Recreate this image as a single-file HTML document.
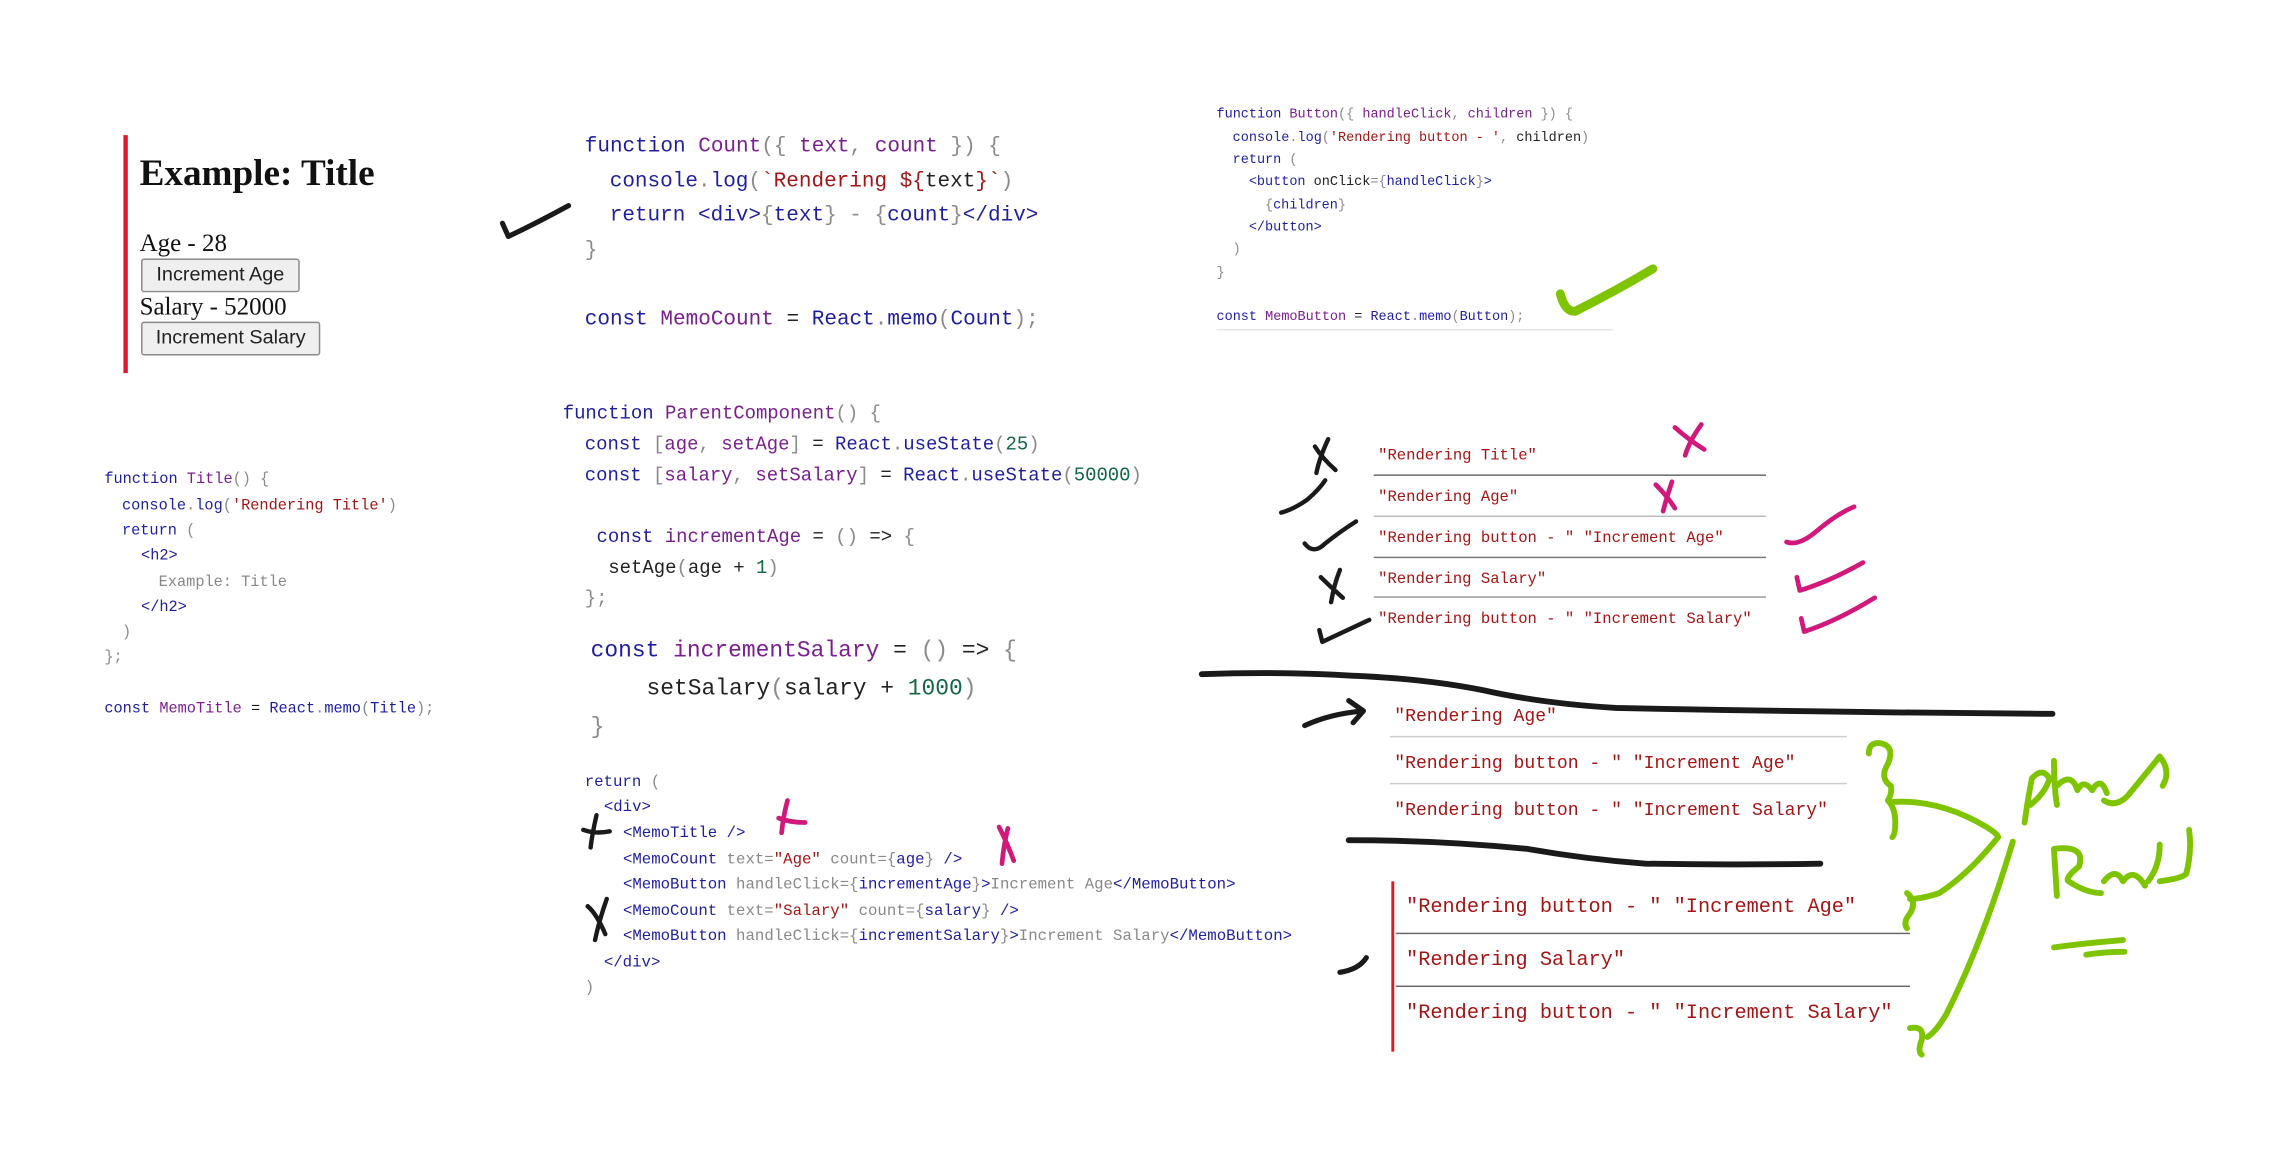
<!DOCTYPE html>
<html><head><meta charset="utf-8">
<style>
html,body{margin:0;padding:0;background:#fff;width:2292px;height:1153px;overflow:hidden}
#s{position:absolute;left:0;top:0;width:1560px;height:785px;transform:scale(1.4692,1.4688);transform-origin:0 0}
.l{position:absolute;white-space:pre;font-family:"Liberation Mono",monospace;line-height:1}
.k{color:#1f1f9e}.f{color:#7a1f8f}.p{color:#8a8a8a}.s{color:#a31515}.n{color:#116644}.t{color:#222}.g{color:#888}
.ser{position:absolute;font-family:"Liberation Serif",serif;color:#111;white-space:pre;line-height:1}
.btn{position:absolute;border:1px solid #8a8a8a;border-radius:2px;background:#efefef;font-family:"Liberation Sans",sans-serif;color:#222;font-size:13.5px;text-align:center;box-sizing:border-box;line-height:20px}
.hr{position:absolute;height:1px;background:#999}
svg{position:absolute;left:0;top:0}
</style></head><body><div id="s">

<div style="position:absolute;left:84px;top:92px;width:3px;height:162px;background:#e0182d"></div>
<div class="ser" style="left:95px;top:106px;font-size:25.3px;font-weight:bold">Example: Title</div>
<div class="ser" style="left:95px;top:157px;font-size:17px">Age - 28</div>
<div class="btn" style="left:96px;top:176px;width:108px;height:23px">Increment Age</div>
<div class="ser" style="left:95px;top:200px;font-size:17px">Salary - 52000</div>
<div class="btn" style="left:96px;top:219px;width:122px;height:23px">Increment Salary</div>

<div style="font-size:14.3px">
<div class="l" style="left:398px;top:93px"><span class="k">function</span> <span class="f">Count</span><span class="p">({</span> <span class="f">text</span><span class="p">,</span> <span class="f">count</span> <span class="p">}) {</span></div>
<div class="l" style="left:415px;top:117px"><span class="k">console</span><span class="p">.</span><span class="k">log</span><span class="p">(</span><span class="s">`Rendering ${</span><span class="t">text</span><span class="s">}`</span><span class="p">)</span></div>
<div class="l" style="left:415px;top:140px"><span class="k">return</span> <span class="k">&lt;div&gt;</span><span class="p">{</span><span class="k">text</span><span class="p">} - {</span><span class="k">count</span><span class="p">}</span><span class="k">&lt;/div&gt;</span></div>
<div class="l p" style="left:398px;top:164px">}</div>
<div class="l" style="left:398px;top:211px"><span class="k">const</span> <span class="f">MemoCount</span> <span class="t">=</span> <span class="k">React</span><span class="p">.</span><span class="k">memo</span><span class="p">(</span><span class="k">Count</span><span class="p">);</span></div>
</div>

<div style="font-size:9.2px">
<div class="l" style="left:828px;top:73px"><span class="k">function</span> <span class="f">Button</span><span class="p">({</span> <span class="f">handleClick</span><span class="p">,</span> <span class="f">children</span> <span class="p">}) {</span></div>
<div class="l" style="left:839px;top:89px"><span class="k">console</span><span class="p">.</span><span class="k">log</span><span class="p">(</span><span class="s">'Rendering button - '</span><span class="p">,</span> <span class="t">children</span><span class="p">)</span></div>
<div class="l k" style="left:839px;top:104px">return <span class="p">(</span></div>
<div class="l" style="left:850px;top:119px"><span class="k">&lt;button</span> <span class="t">onClick</span><span class="p">={</span><span class="k">handleClick</span><span class="p">}</span><span class="k">&gt;</span></div>
<div class="l" style="left:861px;top:135px"><span class="p">{</span><span class="k">children</span><span class="p">}</span></div>
<div class="l k" style="left:850px;top:150px">&lt;/button&gt;</div>
<div class="l p" style="left:839px;top:165px">)</div>
<div class="l p" style="left:828px;top:181px">}</div>
<div class="l" style="left:828px;top:211px"><span class="k">const</span> <span class="f">MemoButton</span> <span class="t">=</span> <span class="k">React</span><span class="p">.</span><span class="k">memo</span><span class="p">(</span><span class="k">Button</span><span class="p">);</span></div>
</div>
<div class="hr" style="left:828px;top:224px;width:270px;background:#e6e6e6"></div>

<div style="font-size:10.4px">
<div class="l" style="left:71px;top:322px"><span class="k">function</span> <span class="f">Title</span><span class="p">() {</span></div>
<div class="l" style="left:83px;top:340px"><span class="k">console</span><span class="p">.</span><span class="k">log</span><span class="p">(</span><span class="s">'Rendering Title'</span><span class="p">)</span></div>
<div class="l k" style="left:83px;top:357px">return <span class="p">(</span></div>
<div class="l k" style="left:96px;top:374px">&lt;h2&gt;</div>
<div class="l g" style="left:108px;top:392px">Example: Title</div>
<div class="l k" style="left:96px;top:409px">&lt;/h2&gt;</div>
<div class="l p" style="left:83px;top:426px">)</div>
<div class="l p" style="left:71px;top:443px">};</div>
<div class="l" style="left:71px;top:478px"><span class="k">const</span> <span class="f">MemoTitle</span> <span class="t">=</span> <span class="k">React</span><span class="p">.</span><span class="k">memo</span><span class="p">(</span><span class="k">Title</span><span class="p">);</span></div>
</div>

<div style="font-size:12.9px">
<div class="l" style="left:383px;top:276px"><span class="k">function</span> <span class="f">ParentComponent</span><span class="p">() {</span></div>
<div class="l" style="left:398px;top:297px"><span class="k">const</span> <span class="p">[</span><span class="f">age</span><span class="p">,</span> <span class="f">setAge</span><span class="p">]</span> <span class="t">=</span> <span class="k">React</span><span class="p">.</span><span class="k">useState</span><span class="p">(</span><span class="n">25</span><span class="p">)</span></div>
<div class="l" style="left:398px;top:318px"><span class="k">const</span> <span class="p">[</span><span class="f">salary</span><span class="p">,</span> <span class="f">setSalary</span><span class="p">]</span> <span class="t">=</span> <span class="k">React</span><span class="p">.</span><span class="k">useState</span><span class="p">(</span><span class="n">50000</span><span class="p">)</span></div>
<div class="l" style="left:406px;top:360px"><span class="k">const</span> <span class="f">incrementAge</span> <span class="t">=</span> <span class="p">()</span> <span class="t">=&gt;</span> <span class="p">{</span></div>
<div class="l" style="left:414px;top:381px"><span class="t">setAge</span><span class="p">(</span><span class="t">age + </span><span class="n">1</span><span class="p">)</span></div>
<div class="l p" style="left:398px;top:402px">};</div>
</div>
<div style="font-size:15.6px">
<div class="l" style="left:402px;top:436px"><span class="k">const</span> <span class="f">incrementSalary</span> <span class="t">=</span> <span class="p">()</span> <span class="t">=&gt;</span> <span class="p">{</span></div>
<div class="l" style="left:440px;top:462px"><span class="t">setSalary</span><span class="p">(</span><span class="t">salary + </span><span class="n">1000</span><span class="p">)</span></div>
<div class="l p" style="left:402px;top:488px">}</div>
</div>
<div style="font-size:10.7px">
<div class="l k" style="left:398px;top:528px">return <span class="p">(</span></div>
<div class="l k" style="left:411px;top:545px">&lt;div&gt;</div>
<div class="l k" style="left:424px;top:563px">&lt;MemoTitle /&gt;</div>
<div class="l" style="left:424px;top:581px"><span class="k">&lt;MemoCount</span> <span class="g">text</span><span class="p">=</span><span class="s">"Age"</span> <span class="g">count</span><span class="p">={</span><span class="k">age</span><span class="p">}</span> <span class="k">/&gt;</span></div>
<div class="l" style="left:424px;top:598px"><span class="k">&lt;MemoButton</span> <span class="g">handleClick</span><span class="p">={</span><span class="k">incrementAge</span><span class="p">}</span><span class="k">&gt;</span><span class="g">Increment Age</span><span class="k">&lt;/MemoButton&gt;</span></div>
<div class="l" style="left:424px;top:616px"><span class="k">&lt;MemoCount</span> <span class="g">text</span><span class="p">=</span><span class="s">"Salary"</span> <span class="g">count</span><span class="p">={</span><span class="k">salary</span><span class="p">}</span> <span class="k">/&gt;</span></div>
<div class="l" style="left:424px;top:633px"><span class="k">&lt;MemoButton</span> <span class="g">handleClick</span><span class="p">={</span><span class="k">incrementSalary</span><span class="p">}</span><span class="k">&gt;</span><span class="g">Increment Salary</span><span class="k">&lt;/MemoButton&gt;</span></div>
<div class="l k" style="left:411px;top:651px">&lt;/div&gt;</div>
<div class="l p" style="left:398px;top:668px">)</div>
</div>

<div style="font-size:10.6px">
<div class="l s" style="left:938px;top:306px">"Rendering Title"</div>
<div class="l s" style="left:938px;top:334px">"Rendering Age"</div>
<div class="l s" style="left:938px;top:362px">"Rendering button - " "Increment Age"</div>
<div class="l s" style="left:938px;top:390px">"Rendering Salary"</div>
<div class="l s" style="left:938px;top:417px">"Rendering button - " "Increment Salary"</div>
</div>
<div class="hr" style="left:935px;top:323px;width:267px;background:#666"></div>
<div class="hr" style="left:935px;top:351px;width:267px;background:#bbb"></div>
<div class="hr" style="left:935px;top:379px;width:267px;background:#777"></div>
<div class="hr" style="left:935px;top:406px;width:267px;background:#999"></div>

<div style="font-size:12.3px">
<div class="l s" style="left:949px;top:482px">"Rendering Age"</div>
<div class="l s" style="left:949px;top:514px">"Rendering button - " "Increment Age"</div>
<div class="l s" style="left:949px;top:546px">"Rendering button - " "Increment Salary"</div>
</div>
<div class="hr" style="left:946px;top:501px;width:311px;background:#ccc"></div>
<div class="hr" style="left:946px;top:533px;width:311px;background:#ccc"></div>

<div style="position:absolute;left:947px;top:600px;width:2px;height:116px;background:#d0202a"></div>
<div style="font-size:13.8px">
<div class="l s" style="left:957px;top:612px">"Rendering button - " "Increment Age"</div>
<div class="l s" style="left:957px;top:648px">"Rendering Salary"</div>
<div class="l s" style="left:957px;top:684px">"Rendering button - " "Increment Salary"</div>
</div>
<div class="hr" style="left:950px;top:635px;width:350px;background:#666"></div>
<div class="hr" style="left:950px;top:671px;width:350px;background:#666"></div>

<svg width="1560" height="785" viewBox="0 0 1560 785" fill="none" stroke-linecap="round" stroke-linejoin="round">
<g stroke="#1a1a1a" stroke-width="3.5">
<path d="M342 152 L346 161 Q365 152 387 140"/>
<path d="M818 459 Q870 457 920 460 Q970 462 1010 470 Q1050 479 1100 482 Q1250 485 1397 486" stroke-width="4"/>
<path d="M918 572 Q980 572 1040 578 Q1080 585 1120 588 Q1180 589 1239 588" stroke-width="4"/>
<path d="M888 494 Q905 486 928 484 M918 477 L928 484 L921 492"/>
<path d="M912 662 Q925 660 930 652"/>
<path d="M895 304 Q900 312 909 320 M904 299 Q898 312 896 322" stroke-width="3"/>
<path d="M872 349 Q880 347 890 340 Q898 333 902 327" stroke-width="3"/>
<path d="M888 370 Q894 378 902 370 Q912 362 923 355" stroke-width="3"/>
<path d="M899 393 Q906 400 914 407 M912 388 Q908 398 906 410" stroke-width="3"/>
<path d="M898 429 L900 437 Q915 430 932 422" stroke-width="3"/>
<path d="M397 565 Q405 568 415 566 M406 555 Q403 568 402 577" stroke-width="3"/>
<path d="M400 617 Q406 622 412 636 M413 612 Q408 626 405 640" stroke-width="3"/>
</g>
<g stroke="#d0197a" stroke-width="3.2">
<path d="M1140 291 Q1150 300 1160 306 M1158 289 Q1150 300 1147 310"/>
<path d="M1127 330 Q1135 338 1140 346 M1138 328 Q1134 340 1132 348"/>
<path d="M1216 369 Q1224 372 1236 362 Q1250 350 1262 345"/>
<path d="M1223 393 L1225 402 Q1245 396 1268 383"/>
<path d="M1226 421 L1228 430 Q1250 423 1276 407"/>
<path d="M530 557 Q538 560 548 560 M536 545 Q533 556 532 567"/>
<path d="M680 563 Q686 575 690 586 M686 564 Q683 576 682 588"/>
</g>
<g stroke="#7ec400" stroke-width="4">
<path d="M1062 200 Q1065 212 1072 212 Q1100 198 1125 183" stroke-width="6"/>
<path d="M1272 513 Q1272 505 1280 506 Q1290 508 1285 520 Q1279 530 1287 535 Q1288 540 1285 545 Q1290 550 1290 560 Q1290 568 1288 570"/>
<path d="M1288 546 Q1320 544 1352 563 Q1360 568 1360 570 Q1340 595 1320 608 Q1308 612 1300 612"/>
<path d="M1298 608 Q1305 614 1300 622 Q1295 628 1298 632"/>
<path d="M1370 573 Q1350 640 1325 690 Q1318 702 1312 706"/>
<path d="M1300 700 Q1310 698 1308 708 Q1305 716 1308 718"/>
<path d="M1378 560 Q1380 545 1383 530 Q1390 522 1395 530 Q1392 540 1382 548 M1398 518 Q1398 535 1400 548 M1400 535 Q1410 525 1414 538 Q1418 530 1424 538 Q1430 528 1434 540 M1432 545 Q1440 550 1448 542 Q1458 530 1470 515 Q1478 525 1472 535"/>
<path d="M1400 610 L1398 578 Q1420 575 1415 590 Q1405 598 1408 600 Q1420 608 1430 608 M1432 600 Q1440 590 1445 600 Q1452 590 1460 603 M1462 600 Q1470 590 1470 575 M1470 600 Q1485 598 1488 595 Q1492 580 1490 565"/>
<path d="M1398 645 Q1420 642 1445 640 M1420 650 Q1432 648 1446 648"/>
</g>
</svg>
</div></body></html>
